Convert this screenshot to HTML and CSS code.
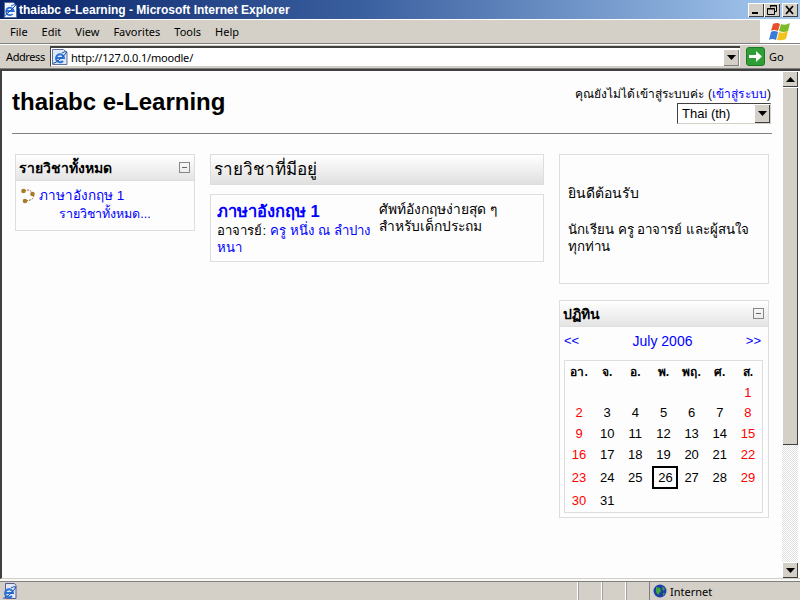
FILE: index.html
```html
<!DOCTYPE html>
<html lang="th">
<head>
<meta charset="utf-8">
<title>thaiabc e-Learning</title>
<link rel="stylesheet" href="styles.css">
</head>
<body>
<div class="window">
  <header class="titlebar">
    <svg class="ie-small" width="16" height="16" viewBox="0 0 16 16"><path d="M2.500 .5h9l3 3v12h-12z" fill="#f4f7ff" stroke="#5a6a9a"/><path d="M4.300 9h7.400a3.800 3.800 0 1 0-1 3" fill="none" stroke="#2a6fd0" stroke-width="1.800"/><path d="M1 14q1 1 5-3t8-8q-2-1-5 1" fill="none" stroke="#1b4fa8"/></svg>
    <span class="title-text">thaiabc e-Learning - Microsoft Internet Explorer</span>
    <div class="win-btns">
      <span class="win-btn"><svg width="16" height="14" viewBox="0 0 16 14"><path d="M4 9h6v2H4z" fill="#000"/></svg></span>
      <span class="win-btn"><svg width="16" height="14" viewBox="0 0 16 14"><path d="M6.500 4.500v-2h6v6h-2M3.500 5.500h7v6h-7zM6 3h7M3 6h8" fill="none" stroke="#000"/></svg></span>
      <span class="win-btn win-close"><svg width="16" height="14" viewBox="0 0 16 14"><path d="M4 3l7 8M11 3l-7 8" stroke="#000" stroke-width="1.800"/></svg></span>
    </div>
  </header>
  <nav class="menubar">
    <ul class="menu">
      <li>File</li><li>Edit</li><li>View</li><li>Favorites</li><li>Tools</li><li>Help</li>
    </ul>
    <div class="flag">
      <svg width="22" height="20" viewBox="0 0 22 20"><path d="M4 2q4-2 7 0l-2 7q-4-2-7 0z" fill="#e8502a"/><path d="M12 2q4 2 9-1l-2 8q-4 2-9 0z" fill="#7cbb2a"/><path d="M2 10q3-2 7 0l-2 8q-4-2-7 0z" fill="#3a7ad8"/><path d="M10 10q4 2 9-1l-2 8q-5 2-9 1z" fill="#f3c120"/></svg>
    </div>
  </nav>
  <div class="addressbar">
    <span class="addr-label">Address</span>
    <div class="addr-field">
      <svg class="addr-icon" width="16" height="16" viewBox="0 0 16 16"><path d="M.5.5h11l3.500 3v12H.5z" fill="#dfe6f5" stroke="#6070a0"/><path d="M4 9h8a4 4 0 1 0-1 3" fill="none" stroke="#2a74d8" stroke-width="2"/><path d="M1 14q1 1 6-3t8-8q-2-1-5 1" fill="none" stroke="#1b4fa8"/></svg>
      <span class="addr-url">http://127.0.0.1/moodle/</span>
      <span class="combo-btn"><svg width="9" height="5" viewBox="0 0 9 5"><path d="M0 0h9L4.500 5z" fill="#000"/></svg></span>
    </div>
    <div class="go">
      <svg width="19" height="19" viewBox="0 0 19 19"><rect x=".5" y=".5" width="18" height="18" rx="2.500" fill="#2f9e35" stroke="#1b7a22"/><path d="M3 8h7V4l6 5.500-6 5.500v-4H3z" fill="#fff"/></svg>
      <span>Go</span>
    </div>
  </div>
  <div class="viewport">
    <main class="page">
      <div class="page-head">
        <h1 class="site-name">thaiabc e-Learning</h1>
        <div class="login">
          <div class="login-text">คุณยังไม่ได้เข้าสู่ระบบค่ะ (<a>เข้าสู่ระบบ</a>)</div>
          <div class="lang-select"><span>Thai (th)</span><span class="combo-btn lang-btn"><svg width="9" height="5" viewBox="0 0 9 5"><path d="M0 0h9L4.500 5z" fill="#000"/></svg></span></div>
        </div>
      </div>
      <hr class="rule">
      <div class="columns">
        <aside class="col-left">
          <section class="block">
            <div class="block-head"><h2>รายวิชาทั้งหมด</h2><span class="toggle"></span></div>
            <div class="block-body course-list">
              <div class="course-row">
                <svg width="17" height="17" viewBox="0 0 17 17"><path d="M4 4q6-3 9 3t-8 7" fill="none" stroke="#a06030" stroke-dasharray="2 1"/><circle cx="3.500" cy="4" r="2.300" fill="#a87b28"/><circle cx="12.500" cy="7" r="2.300" fill="#a87b28"/><circle cx="5" cy="14" r="2.300" fill="#a87b28"/></svg>
                <a>ภาษาอังกฤษ 1</a>
              </div>
              <a class="all-courses">รายวิชาทั้งหมด...</a>
            </div>
          </section>
        </aside>
        <div class="col-center">
          <h2 class="center-head">รายวิชาที่มีอยู่</h2>
          <article class="course-box">
            <div class="course-info">
              <a class="course-name">ภาษาอังกฤษ 1</a>
              <div class="teacher">อาจารย์: <a>ครู หนึ่ง ณ ลำปาง หนา</a></div>
            </div>
            <div class="course-desc">ศัพท์อังกฤษง่ายสุด ๆ สำหรับเด็กประถม</div>
          </article>
        </div>
        <aside class="col-right">
          <section class="welcome">
            <p class="welcome-hi">ยินดีต้อนรับ</p>
            <p>นักเรียน ครู อาจารย์ และผู้สนใจทุกท่าน</p>
          </section>
          <section class="block">
            <div class="block-head"><h2>ปฏิทิน</h2><span class="toggle"></span></div>
            <div class="cal-nav"><a>&lt;&lt;</a><a class="cal-month">July 2006</a><a>&gt;&gt;</a></div>
            <table class="cal">
              <thead><tr><th>อา.</th><th>จ.</th><th>อ.</th><th>พ.</th><th>พฤ.</th><th>ศ.</th><th>ส.</th></tr></thead>
              <tbody>
                <tr class="row-first"><td></td><td></td><td></td><td></td><td></td><td></td><td class="we">1</td></tr>
                <tr><td class="we">2</td><td>3</td><td>4</td><td>5</td><td>6</td><td>7</td><td class="we">8</td></tr>
                <tr><td class="we">9</td><td>10</td><td>11</td><td>12</td><td>13</td><td>14</td><td class="we">15</td></tr>
                <tr><td class="we">16</td><td>17</td><td>18</td><td>19</td><td>20</td><td>21</td><td class="we">22</td></tr>
                <tr class="row-today"><td class="we">23</td><td>24</td><td>25</td><td><span class="today">26</span></td><td>27</td><td>28</td><td class="we">29</td></tr>
                <tr class="row-last"><td class="we">30</td><td>31</td><td></td><td></td><td></td><td></td><td></td></tr>
              </tbody>
            </table>
          </section>
        </aside>
      </div>
    </main>
    <div class="scrollbar">
      <span class="sb-btn"><svg width="9" height="5" viewBox="0 0 9 5"><path d="M4.500 0L9 5H0z" fill="#000"/></svg></span>
      <span class="sb-thumb"></span>
      <span class="sb-track"></span>
      <span class="sb-btn"><svg width="9" height="5" viewBox="0 0 9 5"><path d="M0 0h9L4.500 5z" fill="#000"/></svg></span>
    </div>
  </div>
  <footer class="statusbar">
    <svg class="status-ie" width="16" height="16" viewBox="0 0 16 16"><path d="M3.500.5h9l1.500 2v13H3.500z" fill="#dfe6f5" stroke="#5a5a90"/><path d="M3 10h8a4 4 0 1 0-1 3" fill="none" stroke="#2a74d8" stroke-width="2"/><path d="M1 15q1 1 6-3t7-8q-2-1-5 1" fill="none" stroke="#1b4fa8"/></svg>
    <span class="status-main"></span>
    <span class="status-cell"></span><span class="status-cell"></span><span class="status-cell"></span>
    <span class="status-zone">
      <svg width="14" height="14" viewBox="0 0 14 14"><circle cx="7" cy="7" r="6.500" fill="#1f3fa8"/><path d="M3 3l4 1 1 3-3 4-2-3zM9 2l3 3-2 2zM10 9l2 0-2 3z" fill="#3fa83a"/></svg>
      <span>Internet</span>
    </span>
  </footer>
</div>
</body>
</html>
```
FILE: styles.css
```css
* { box-sizing: border-box; }
html, body { margin: 0; height: 100%; overflow: hidden; }
body { font-family: "Liberation Sans", "Noto Sans", "DejaVu Sans", sans-serif; font-size: 13px; color: #000; background: #d4d0c8; }
a { color: #0000ff; }
h1, h2, p { margin: 0; }
.window { width: 800px; height: 600px; display: flex; flex-direction: column; }

.titlebar { height: 19px; flex: none; display: flex; align-items: center; padding: 0 2px; background: linear-gradient(90deg, #0a246a 0%, #3a5f9f 45%, #a6caf0 100%); color: #fff; font: bold 12px "Liberation Sans", sans-serif; }
.ie-small { flex: none; margin-right: 1px; }
.title-text { flex: 1; white-space: nowrap; }
.win-btns { display: flex; gap: 0; }
.win-btn { width: 16px; height: 14px; display: block; background: #d4d0c8; box-shadow: inset 1px 1px 0 #fff, inset -1px -1px 0 #404040; }
.win-btn svg { display: block; }
.win-close { margin-left: 2px; }

.menubar { height: 25px; flex: none; display: flex; align-items: stretch; justify-content: space-between; border-top: 1px solid #fff; border-bottom: 1px solid #808080; }
.menu { list-style: none; margin: 0; padding: 0 0 0 10px; display: flex; gap: 14px; align-items: center; font: 11px "Noto Sans", sans-serif; }
.flag { width: 40px; background: #fff; display: flex; align-items: center; justify-content: center; }

.addressbar { height: 25px; flex: none; display: flex; align-items: center; border-top: 1px solid #fff; border-bottom: 1px solid #808080; }
.addr-label { width: 50px; padding-left: 6px; flex: none; font: 11px "Noto Sans", sans-serif; letter-spacing: -0.4px; }
.addr-field { width: 690px; height: 21px; flex: none; display: flex; align-items: center; background: #fff; border-top: 2px solid #404040; border-left: 1px solid #404040; border-bottom: 1px solid #d4d0c8; padding: 0 1px; }
.addr-icon { flex: none; margin-right: 3px; }
.addr-url { flex: 1; font: 11px "Noto Sans", sans-serif; letter-spacing: -0.2px; }
.combo-btn { width: 16px; height: 17px; flex: none; display: flex; align-items: center; justify-content: center; background: #d4d0c8; box-shadow: inset 1px 1px 0 #fff, inset -1px -1px 0 #808080; }
.go { flex: 1; display: flex; align-items: center; gap: 4px; padding-left: 6px; font: 11px "Noto Sans", sans-serif; }

.viewport { height: 510px; margin-bottom: 2px; flex: none; display: flex; background: #fff; border-top: 2px solid #404040; border-left: 2px solid #404040; border-bottom: 1px solid #d4d0c8; box-shadow: 0 2px 0 #f8f8f4; }
.page { width: 780px; flex: none; padding: 0 10px; background: #fdfdfd; }
.page-head { height: 62px; display: flex; justify-content: space-between; align-items: flex-start; }
.site-name { margin-top: 17px; font: bold 24px/28px "Liberation Sans", sans-serif; }
.login { margin-top: 15px; margin-right: 1px; display: flex; flex-direction: column; align-items: flex-end; font-size: 12px; }
.login-text { line-height: 16px; white-space: nowrap; letter-spacing: 0.1px; }
.lang-select { width: 94px; height: 21px; margin-top: 1px; display: flex; align-items: center; justify-content: space-between; padding-left: 4px; background: #fff; border: 1px solid #808080; border-top-color: #404040; border-left-color: #404040; border-right-color: #d4d0c8; border-bottom-color: #d4d0c8; font-size: 13px; }
.lang-btn { height: 19px; box-shadow: inset 1px 1px 0 #fff, inset -1px -1px 0 #404040; }
.rule { margin: 0; height: 1px; border: 0; background: #808080; }

.columns { display: grid; grid-template-columns: 180px 334px 210px; column-gap: 15px; padding: 20px 0 0 3px; align-items: start; }
.block { border: 1px solid #ddd; }
.block-head { display: flex; align-items: center; justify-content: space-between; height: 26px; padding: 0 3px; background: linear-gradient(#fff, #e4e4e4); border-bottom: 1px solid #ddd; }
.block-head h2 { font-size: 14px; font-weight: bold; line-height: 20px; }
.toggle { width: 11px; height: 11px; border: 1px solid #888; position: relative; flex: none; margin-right: 1px; }
.toggle::after { content: ""; position: absolute; left: 2px; right: 2px; top: 4px; height: 1px; background: #666; }
.course-list { padding: 4px; height: 49px; }
.course-row { display: flex; align-items: center; gap: 2px; height: 20px; font-size: 13.500px; }
.all-courses { display: block; text-align: center; font-size: 12.500px; line-height: 19px; }

.center-head { height: 31px; padding: 0 3px; border: 1px solid #ddd; background: linear-gradient(#fff, #e0e0e0); font-size: 17px; font-weight: normal; line-height: 29px; }
.course-box { margin-top: 9px; height: 68px; border: 1px solid #ddd; display: flex; padding: 5px 6px; }
.course-info { width: 162px; flex: none; font-size: 13.200px; line-height: 17px; }
.course-name { display: block; font-size: 16.500px; font-weight: bold; line-height: 22px; }
.teacher { letter-spacing: 0.1px; }
.course-desc { width: 130px; padding-top: 1px; font-size: 13.800px; line-height: 17px; }

.welcome { height: 130px; padding: 30px 8px 0; border: 1px solid #ddd; margin-bottom: 16px; font-size: 13.300px; line-height: 17px; }
.welcome-hi { font-size: 14px; }
.welcome p + p { margin-top: 19px; }
.cal-nav { display: flex; justify-content: space-between; padding: 5px 7px 0 4px; height: 33px; font-size: 13px; line-height: 18px; }
.cal-month { font-size: 14px; }
.cal { margin: 0 4px 4px; width: 199px; border: 1px solid #ddd; border-collapse: separate; border-spacing: 0; table-layout: fixed; font-size: 13px; text-align: center; }
.cal th { height: 21px; font-size: 12px; padding: 0; }
.cal td { height: 21px; padding: 0; }
.cal .row-first td { height: 20px; }
.cal .row-today td { height: 24px; }
.cal .row-last td { height: 23px; }
.cal .we { color: #f00; }
.today { display: block; width: 26px; height: 23px; margin: 0 0 0 3px; border: 2px solid #000; line-height: 20px; }

.scrollbar { width: 16px; margin-right: 2px; flex: none; display: flex; flex-direction: column; }
.sb-btn { height: 16px; flex: none; display: flex; align-items: center; justify-content: center; background: #d4d0c8; box-shadow: inset 1px 1px 0 #fff, inset -1px -1px 0 #404040; }
.sb-thumb { height: 358px; flex: none; background: #d4d0c8; box-shadow: inset 1px 1px 0 #fff, inset -1px -1px 0 #404040; }
.sb-track { flex: 1; background: repeating-conic-gradient(#e0e0e0 0 25%, #fff 0 50%) 0 0 / 2px 2px; }

.statusbar { flex: 1; display: flex; align-items: center; border-top: 1px solid #808080; font: 11px "Noto Sans", sans-serif; }
.status-ie { flex: none; margin-left: 2px; }
.status-main { flex: 1; }
.status-cell { width: 24px; height: 100%; border-left: 1px solid #fff; box-shadow: inset 1px 0 0 #a0a0a0; }
.status-zone { width: 151px; height: 100%; display: flex; align-items: center; gap: 3px; padding-left: 3px; border-left: 1px solid #808080; }
```
